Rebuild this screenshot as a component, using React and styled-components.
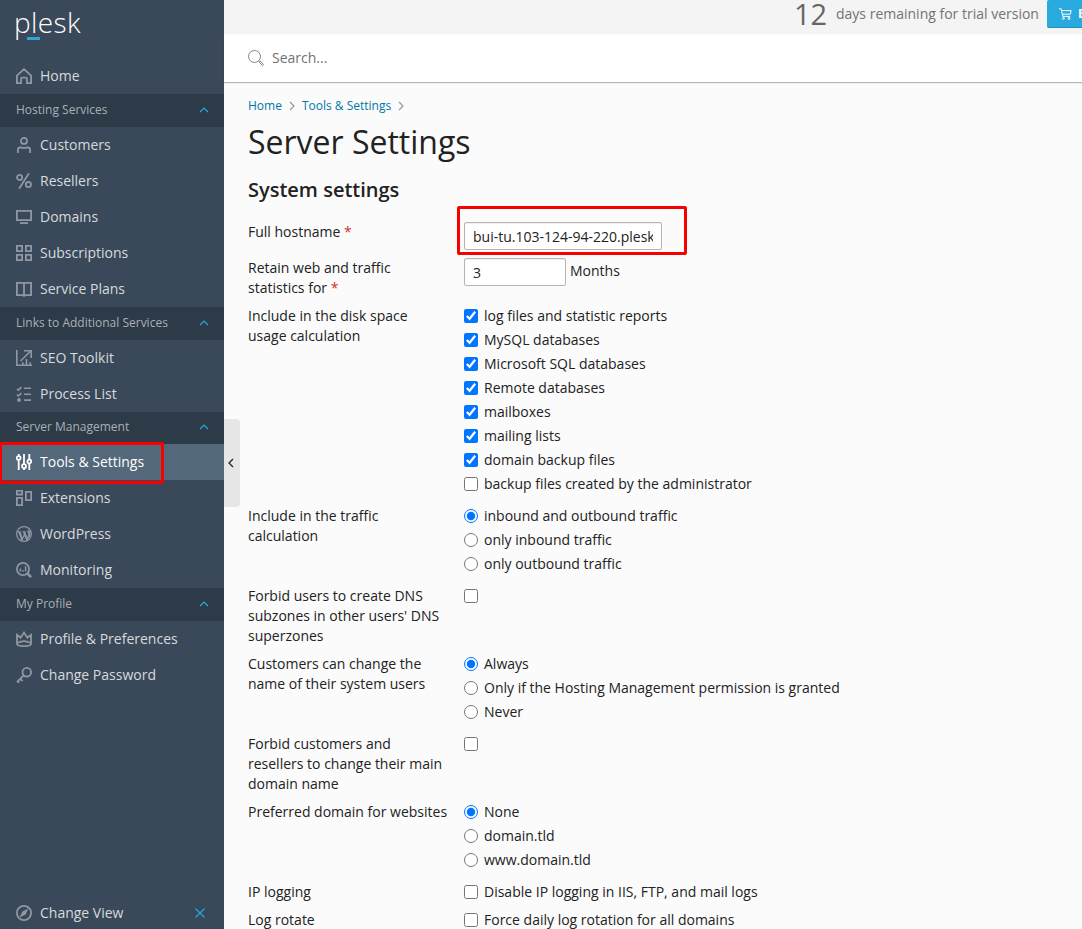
import React from 'react';
import styled, { createGlobalStyle, css } from 'styled-components';

const GlobalStyle = createGlobalStyle`
  *, *::before, *::after { box-sizing: border-box; }
  body {
    margin: 0;
    overflow: hidden;
    background: #fbfbfb;
    color: #222;
    font: 14px/20px "Open Sans", "Noto Sans", sans-serif;
  }
`;

const Page = styled.div`
  display: flex;
  height: 100vh;
  position: relative;
`;

/* ---------- sidebar ---------- */

const Sidebar = styled.nav`
  display: flex;
  flex-direction: column;
  flex: none;
  width: 224px;
  height: 100vh;
  background: #3a4959;
`;

const LogoBar = styled.div`
  height: 58.4px;
  flex: none;
  padding: 5px 0 0 14px;
`;

const Logo = styled.div`
  position: relative;
  width: max-content;
  color: #fff;
  font: 300 28px/34px "Open Sans", sans-serif;
  letter-spacing: 0.4px;

  &::after {
    content: '';
    position: absolute;
    left: 13px;
    top: 32px;
    width: 13px;
    height: 3px;
    background: #33a5d1;
  }
`;

const NavItem = styled.a`
  position: relative;
  display: flex;
  align-items: center;
  flex: none;
  gap: 8px;
  height: 36px;
  padding: 0 16px;
  font-weight: 500;
  color: ${(p) => (p.$active ? '#fff' : '#d6dade')};
  background: ${(p) => (p.$active ? '#53687a' : 'transparent')};

  > svg { color: ${(p) => (p.$active ? '#fff' : '#8f97a3')}; }
`;

const NavHeader = styled.div`
  display: flex;
  align-items: center;
  justify-content: space-between;
  flex: none;
  height: 32.6px;
  padding: 0 16px 1px;
  background: #2d3a47;
  color: #a9b0b8;
  font-size: 12px;
  > svg { color: #28aade; }
`;

const ChangeView = styled(NavItem)`
  margin: auto 0 -2px;
  padding-right: 19px;
  > svg:last-child { color: #28aade; margin-left: auto; }
`;

const Highlight = styled.div`
  position: absolute;
  border: 3px solid #f80000;
  border-radius: 2px;
  pointer-events: none;
  z-index: 2;
  ${(p) =>
    p.$kind === 'nav'
      ? css`left: -1px; top: -2px; width: 165px; height: 42px;`
      : css`left: -7px; top: -16px; width: 230px; height: 49px;`}
`;

const CollapseHandle = styled.button`
  position: absolute;
  left: 224px;
  top: 419px;
  width: 16px;
  height: 88px;
  padding: 0 2px 0 0;
  border: 0;
  border-radius: 0 4px 4px 0;
  background: #e6e6e6;
  color: #222;
  display: flex;
  align-items: center;
  justify-content: center;
`;

/* ---------- main column ---------- */

const Main = styled.main`
  flex: 1;
  min-width: 0;
  display: flex;
  flex-direction: column;
`;

const TrialBar = styled.div`
  display: flex;
  flex: none;
  height: 34px;
  padding-left: 570px;
  background: #f4f4f4;
  color: #737373;
  white-space: nowrap;
  overflow: hidden;
`;

const Days = styled.span`
  flex: none;
  width: 42px;
  font-size: 29px;
  line-height: 28px;
  color: #666;
`;

const TrialText = styled.span`
  flex: none;
  width: 211px;
  line-height: 28px;
`;

const BuyButton = styled.button`
  display: flex;
  align-items: center;
  flex: none;
  gap: 6px;
  height: 28px;
  padding: 0 12px 0 12px;
  border: 0;
  border-bottom: 1px solid #1e8fbe;
  border-radius: 2px;
  background: #28aade;
  color: #fff;
  font: 700 12px/20px "Open Sans", sans-serif;
`;

const SearchBar = styled.div`
  display: flex;
  align-items: center;
  flex: none;
  gap: 8px;
  height: 48px;
  padding-left: 24px;
  background: #fff;
  color: #737373;
  box-shadow: 0 1px 1px rgba(0, 0, 0, 0.28);
`;

const Content = styled.section`
  padding: 14px 24px 0;
  overflow: hidden;
  flex: 1;
`;

const Breadcrumbs = styled.div`
  display: flex;
  align-items: center;
  gap: 6px;
  height: 20px;
  font-size: 12px;
  > svg { color: #999; }
`;

const Crumb = styled.a`
  color: #0078a8;
`;

const Title = styled.h1`
  margin: 4px 0 0;
  font-size: 32px;
  line-height: 44px;
  font-weight: 400;
`;

const SectionTitle = styled.h2`
  margin: 12px 0 18px;
  font-size: 20px;
  line-height: 28px;
  font-weight: 600;
`;

const Row = styled.div`
  display: grid;
  grid-template-columns: 200px 1fr;
  column-gap: 16px;
  margin-bottom: 8px;
`;

const Required = styled.span`
  color: #d02f2c;
`;

const Field = styled.div`
  position: relative;
  display: flex;
  gap: 4px;
  height: 28px;
  line-height: 26px;
`;

const TextInput = styled.input`
  width: ${(p) => p.$width}px;
  height: 28px;
  padding: 0 8px;
  border: 1px solid #b5b5b5;
  border-radius: 2px;
  background: #fff;
  box-shadow: inset 0 1px 1px #eee;
  color: #222;
  font: inherit;
  outline: 0;
`;

const Options = styled.div`
  display: flex;
  flex-direction: column;
  gap: 4px;
  padding-bottom: ${(p) => (p.$multi ? 4 : 0)}px;
`;

const Option = styled.label`
  display: flex;
  align-items: center;
  gap: 6px;
  height: 20px;
`;

const Choice = styled.input`
  flex: none;
  width: 14px;
  height: 14px;
  margin: 0;
  accent-color: #0075ff;
`;

/* ---------- icons ---------- */

const Svg = ({ children, w = 1.8 }) => (
  <svg width="16" height="16" viewBox="0 0 16 16" fill="none" stroke="currentColor" strokeWidth={w}>
    {children}
  </svg>
);

const icons = {
  home: <Svg><path d="M.9 7.6 8 1.2l7.1 6.4v7.5H11V10.7Q11 9.6 10 9.6H6Q5 9.6 5 10.7v4.4H.9z" /></Svg>,
  user: <Svg><circle cx="8" cy="3.9" r="3" /><path d="M1.9 16v-3.2q0-2.3 2.3-2.3h1.1q2.7 1 5.4 0h1.1q2.3 0 2.3 2.3V16" /></Svg>,
  percent: <Svg><circle cx="3.6" cy="4.4" r="2.6" /><circle cx="12.4" cy="11.6" r="2.6" /><path d="M12.9.3 3.1 15.7" /></Svg>,
  monitor: <Svg><path d="M.9 1.9h14.2v9.2H.9z" /><path d="M4 14.1h8" /></Svg>,
  grid: <Svg><path d="M.9.9h5.2v5.2H.9zM9.9.9h5.2v5.2H9.9zM.9 9.9h5.2v5.2H.9zM9.9 9.9h5.2v5.2H9.9z" /></Svg>,
  book: <Svg><path d="M.9 1.8h5.5q1 0 1.6.8.6-.8 1.6-.8h5.5v12.3H9.6q-1 0-1.6.7-.6-.7-1.6-.7H.9zM8 2.5v12.5" /></Svg>,
  seo: <Svg w={1.6}><path d="M.8 0v15.2H16M4.5 11 14 1.8M8 .8h7.2V8M6.8 12.2v3M10.5 9v6M14.2 12.2v3" /></Svg>,
  process: <Svg w={1.6}><path d="M1 2.8 2.4 4.1 5.4 1.2M1 8.7 2.4 10 5.4 7.1M8 2.3h7M8 8.3h7M8 14.1h7" /><circle cx="3" cy="14" r="1.9" fill="currentColor" stroke="none" /></Svg>,
  tools: <Svg><path d="M2.7 6v10M2.7 0v2M8 0v10M8 14.5V16M13.3 9.5V16M13.3 0v5" /><circle cx="2.7" cy="4" r="1.9" /><circle cx="8" cy="12.2" r="2" /><circle cx="13.3" cy="7.4" r="1.9" /></Svg>,
  extensions: <Svg><path d="M.9.9h5.2v3.6H.9zM.9 7.9h5.2v7.2H.9zM9.9 1.9h5.2v8.2H9.9z" /></Svg>,
  monitoring: <Svg><circle cx="7" cy="7" r="6.1" /><path d="M4.4 6.6v3M7 8v1.6M9.6 4.2v5.4" strokeWidth="1.5" /><path d="m11.6 11.6 3.5 3.5" strokeWidth="2.6" /></Svg>,
  crown: <Svg><path d="M1 3.8 4.6 6.7 8 1.6l3.4 5.1L15 3.8v9.4q-1.3 2-7 2t-7-2z" /><path d="M2 11.8q6-3.4 12 0" /></Svg>,
  key: <Svg><circle cx="10.8" cy="5.2" r="4.3" /><path d="M7.7 8.4.9 15.1M1 13.9l2.2 2M4.3 11.9l2.3 2.2" /></Svg>,
  compass: <Svg><circle cx="8" cy="8" r="7.1" /><path d="M12.4 3.6 9.6 9.6 3.6 12.4 6.4 6.4z" fill="currentColor" stroke="none" /></Svg>,
  wordpress: (
    <svg width="16" height="16" viewBox="0 0 16 16" fill="currentColor">
      <circle cx="8" cy="8" r="7.4" fill="none" stroke="currentColor" strokeWidth="1.2" />
      <path d="M1.6 5.2h3.7v.6h-.8l2.1 6 1.2-3.6-.9-2.4h-.7v-.6h4v.6h-.9l2 6 .8-2.8c.6-1.8-.7-2.7-.7-3.7 0-.8.6-1.4 1.4-1.5l1.6 2.8-.2 3.4-3.1 4.4-.8.2L8.3 9.9l-1.9 5-.9-.3L1.9 5.8z" />
    </svg>
  ),
};

const Chevron = ({ dir, size = 8 }) => {
  const d = { up: 'M0 6 4 2l4 4', right: 'M2 0l4 4-4 4', left: 'M6 0 2 4l4 4' }[dir];
  return (
    <svg width={size} height={size} viewBox="0 0 8 8" fill="none" stroke="currentColor" strokeWidth={dir === 'left' ? 1.3 : 1.2} overflow="visible">
      <path d={d} />
    </svg>
  );
};

/* ---------- data ---------- */

const menu = [
  { items: [['home', 'Home']] },
  {
    title: 'Hosting Services',
    items: [['user', 'Customers'], ['percent', 'Resellers'], ['monitor', 'Domains'], ['grid', 'Subscriptions'], ['book', 'Service Plans']],
  },
  { title: 'Links to Additional Services', items: [['seo', 'SEO Toolkit'], ['process', 'Process List']] },
  {
    title: 'Server Management',
    items: [['tools', 'Tools & Settings', true], ['extensions', 'Extensions'], ['wordpress', 'WordPress'], ['monitoring', 'Monitoring']],
  },
  { title: 'My Profile', items: [['crown', 'Profile & Preferences'], ['key', 'Change Password']] },
];

const settings = [
  {
    label: 'Include in the disk space usage calculation',
    type: 'checkbox',
    options: [
      ['log files and statistic reports', true],
      ['MySQL databases', true],
      ['Microsoft SQL databases', true],
      ['Remote databases', true],
      ['mailboxes', true],
      ['mailing lists', true],
      ['domain backup files', true],
      ['backup files created by the administrator', false],
    ],
  },
  {
    label: 'Include in the traffic calculation',
    type: 'radio',
    options: [['inbound and outbound traffic', true], ['only inbound traffic'], ['only outbound traffic']],
  },
  { label: "Forbid users to create DNS subzones in other users' DNS superzones", type: 'checkbox', options: [['']] },
  {
    label: 'Customers can change the name of their system users',
    type: 'radio',
    options: [['Always', true], ['Only if the Hosting Management permission is granted'], ['Never']],
  },
  { label: 'Forbid customers and resellers to change their main domain name', type: 'checkbox', options: [['']] },
  { label: 'Preferred domain for websites', type: 'radio', options: [['None', true], ['domain.tld'], ['www.domain.tld']] },
  { label: 'IP logging', type: 'checkbox', options: [['Disable IP logging in IIS, FTP, and mail logs']] },
  { label: 'Log rotate', type: 'checkbox', options: [['Force daily log rotation for all domains']] },
];

export default function App() {
  return (
    <Page>
      <GlobalStyle />
      <Sidebar>
        <LogoBar><Logo>plesk</Logo></LogoBar>
        {menu.map((group, i) => (
          <React.Fragment key={i}>
            {group.title && <NavHeader>{group.title}<Chevron dir="up" /></NavHeader>}
            {group.items.map(([icon, text, active]) => (
              <NavItem key={text} $active={active}>
                {icons[icon]}
                <span>{text}</span>
                {active && <Highlight $kind="nav" />}
              </NavItem>
            ))}
          </React.Fragment>
        ))}
        <ChangeView>
          {icons.compass}
          <span>Change View</span>
          <svg width="10" height="10" viewBox="0 0 10 10" stroke="currentColor" strokeWidth="1.1"><path d="M.5.5l9 9M9.5.5l-9 9" /></svg>
        </ChangeView>
      </Sidebar>
      <Main>
        <TrialBar>
          <Days>12</Days>
          <TrialText>days remaining for trial version</TrialText>
          <BuyButton>
            <svg width="13" height="12" viewBox="0 0 13 12" fill="none" stroke="currentColor">
              <path d="M0 .8h2.2l1.6 7.6h7.4M2.8 2.6h9.4l-.9 3.6H3.4" />
              <circle cx="4.4" cy="10.4" r="1" /><circle cx="10" cy="10.4" r="1" />
            </svg>
            Buy
          </BuyButton>
        </TrialBar>
        <SearchBar>
          <svg width="16" height="16" viewBox="0 0 16 16" fill="none" stroke="#858585">
            <circle cx="6.5" cy="6.5" r="6" />
            <path d="m10.9 11.9 1-1 3.4 3.3q.4.6-.1 1t-1 0z" />
          </svg>
          Search...
        </SearchBar>
        <Content>
          <Breadcrumbs>
            <Crumb>Home</Crumb><Chevron dir="right" />
            <Crumb>Tools &amp; Settings</Crumb><Chevron dir="right" />
          </Breadcrumbs>
          <Title>Server Settings</Title>
          <SectionTitle>System settings</SectionTitle>
          <Row>
            <div>Full hostname <Required>*</Required></div>
            <Field>
              <TextInput $width={198} defaultValue="bui-tu.103-124-94-220.plesk.page" />
              <Highlight $kind="field" />
            </Field>
          </Row>
          <Row>
            <div>Retain web and traffic statistics for <Required>*</Required></div>
            <Field><TextInput $width={102} defaultValue="3" />Months</Field>
          </Row>
          {settings.map(({ label, type, options }) => (
            <Row key={label}>
              <div>{label}</div>
              <Options $multi={options.length > 1}>
                {options.map(([text, on]) => (
                  <Option key={text}>
                    <Choice type={type} name={label} defaultChecked={!!on} />
                    {text}
                  </Option>
                ))}
              </Options>
            </Row>
          ))}
        </Content>
      </Main>
      <CollapseHandle><Chevron dir="left" /></CollapseHandle>
    </Page>
  );
}
